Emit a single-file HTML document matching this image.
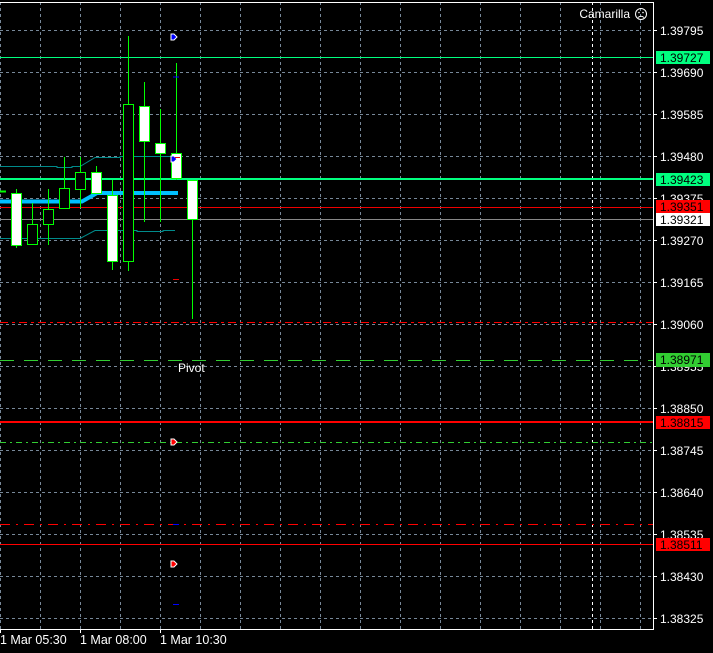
<!DOCTYPE html>
<html><head><style>html,body{margin:0;padding:0;background:#000;overflow:hidden}</style></head>
<body>
<svg width="713" height="653" xmlns="http://www.w3.org/2000/svg" style="display:block" font-family="Liberation Sans, sans-serif">
<rect width="713" height="653" fill="#000"/>
<g stroke="#778899" stroke-width="1" stroke-dasharray="3,3">
<path d="M0.5 2V629M40.5 2V629M80.5 2V629M120.5 2V629M160.5 2V629M200.5 2V629M240.5 2V629M280.5 2V629M320.5 2V629M360.5 2V629M400.5 2V629M440.5 2V629M480.5 2V629M520.5 2V629M560.5 2V629M600.5 2V629M640.5 2V629"/>
<path d="M0 30.5H653M0 72.5H653M0 114.5H653M0 156.5H653M0 198.5H653M0 240.5H653M0 282.5H653M0 324.5H653M0 366.5H653M0 408.5H653M0 450.5H653M0 492.5H653M0 534.5H653M0 576.5H653M0 618.5H653"/>
</g>
<path d="M592.5 2V629" stroke="#fff" stroke-dasharray="3,3"/>
<path d="M0 57.5H653" stroke="#00ff7f"/>
<path d="M0 179H653" stroke="#00ff7f" stroke-width="2"/>
<path d="M0 207.5H653" stroke="#e00"/>
<path d="M0 219.5H653" stroke="#888"/>
<path d="M0 322.5H653" stroke="#ff0000" stroke-dasharray="8,4,3,4"/>
<path d="M0 360.5H653" stroke="#32cd32" stroke-dasharray="14,10"/>
<path d="M0 422H653" stroke="#f00" stroke-width="2"/>
<path d="M0 442.5H653" stroke="#32cd32" stroke-dasharray="6,4,2,4"/>
<path d="M0 524.5H653" stroke="#f00" stroke-dasharray="10,6,2,6"/>
<path d="M0 544.5H653" stroke="#f00"/>
<path d="M0 166.5H57V167.5H72V166.5H80L95 157.5H120V156.5H175" stroke="#008b8b" fill="none"/>
<path d="M0 238.5H80L95 230.5H137V231.5H163V230.5H175" stroke="#008b8b" fill="none"/>
<path d="M0 201.5H82L97 193H178" stroke="#00bfff" stroke-width="4" fill="none"/>
<g stroke="#00ff00" stroke-width="1">
<path d="M16.5 189V248M32.5 203V245M48.5 189V245M64.5 157V208M80.5 157V208M96.5 166V193M112.5 180V270M128.5 36V271M144.5 82V222M160.5 109V222M176.5 63V180M192.5 180V319"/>
</g>
<g stroke="#00ff00">
<rect x="11.5" y="193.5" width="10" height="52" fill="#fff"/>
<rect x="27.5" y="224.5" width="10" height="20" fill="#000"/>
<rect x="43.5" y="209.5" width="10" height="15" fill="#000"/>
<rect x="59.5" y="188.5" width="10" height="20" fill="#000"/>
<rect x="75.5" y="172.5" width="10" height="17" fill="#000"/>
<rect x="91.5" y="172.5" width="10" height="21" fill="#fff"/>
<rect x="107.5" y="195.5" width="10" height="66" fill="#fff"/>
<rect x="123.5" y="104.5" width="10" height="157" fill="#000"/>
<rect x="139.5" y="106.5" width="10" height="35" fill="#fff"/>
<rect x="155.5" y="143.5" width="10" height="10" fill="#fff"/>
<rect x="171.5" y="153.5" width="10" height="25" fill="#fff"/>
<rect x="187.5" y="180.5" width="10" height="39" fill="#fff"/>
</g>
<path d="M0 191.5H6" stroke="#00ff00" stroke-width="2"/>
<g stroke="#fff" stroke-width="1">
<path d="M171 34h3l3 3l-3 3h-3z" fill="#0000ff"/>
<path d="M171 156h3l3 3l-3 3h-3z" fill="#0000ff"/>
<path d="M171 439h3l3 3l-3 3h-3z" fill="#ff0000"/>
<path d="M171 561h3l3 3l-3 3h-3z" fill="#ff0000"/>
</g>
<path d="M173 77h6M173 524.5h6M173 604.5h6" stroke="#00f"/>
<path d="M173 279.5h6M175 157.5h5" stroke="#e00"/>
<text x="178" y="372" fill="#fff" font-size="12">Pivot</text>
<text x="630" y="18" fill="#fff" font-size="12" text-anchor="end">Camarilla</text>
<circle cx="641" cy="14" r="5.5" fill="none" stroke="#fff"/>
<circle cx="639" cy="12.5" r="0.8" fill="#fff"/><circle cx="643" cy="12.5" r="0.8" fill="#fff"/>
<path d="M638 17.5q3-2.5 6 0" stroke="#fff" fill="none"/>
<path d="M0 2.5H653.5V629.5H0" stroke="#fff" fill="none"/>
<g stroke="#fff"><path d="M653 30.5h4M653 72.5h4M653 114.5h4M653 156.5h4M653 198.5h4M653 240.5h4M653 282.5h4M653 324.5h4M653 366.5h4M653 408.5h4M653 450.5h4M653 492.5h4M653 534.5h4M653 576.5h4M653 618.5h4M0.5 629v4M80.5 629v4M160.5 629v4"/></g>
<g fill="#fff" font-size="12">
<text x="660" y="35">1.39795</text><text x="660" y="77">1.39690</text><text x="660" y="119">1.39585</text><text x="660" y="161">1.39480</text><text x="660" y="203">1.39375</text><text x="660" y="245">1.39270</text><text x="660" y="287">1.39165</text><text x="660" y="329">1.39060</text><text x="660" y="371">1.38955</text><text x="660" y="413">1.38850</text><text x="660" y="455">1.38745</text><text x="660" y="497">1.38640</text><text x="660" y="539">1.38535</text><text x="660" y="581">1.38430</text><text x="660" y="623">1.38325</text>
</g>
<rect x="656" y="51" width="54" height="13" fill="#00ff7f"/><text x="660" y="62" font-size="12" fill="#000">1.39727</text>
<rect x="656" y="173" width="54" height="13" fill="#00ff7f"/><text x="660" y="184" font-size="12" fill="#000">1.39423</text>
<rect x="656" y="200" width="54" height="13" fill="#ff0000"/><text x="660" y="211" font-size="12" fill="#000">1.39351</text>
<rect x="656" y="213" width="54" height="13" fill="#fff"/><text x="660" y="224" font-size="12" fill="#000">1.39321</text>
<rect x="656" y="353" width="54" height="14" fill="#32cd32"/><text x="660" y="364" font-size="12" fill="#000">1.38971</text>
<rect x="656" y="416" width="54" height="13" fill="#ff0000"/><text x="660" y="427" font-size="12" fill="#000">1.38815</text>
<rect x="656" y="538" width="54" height="13" fill="#ff0000"/><text x="660" y="549" font-size="12" fill="#000">1.38511</text>
<g fill="#fff" font-size="12.5">
<text x="0" y="644">1 Mar 05:30</text><text x="80" y="644">1 Mar 08:00</text><text x="160" y="644">1 Mar 10:30</text>
</g>
</svg>
</body></html>
